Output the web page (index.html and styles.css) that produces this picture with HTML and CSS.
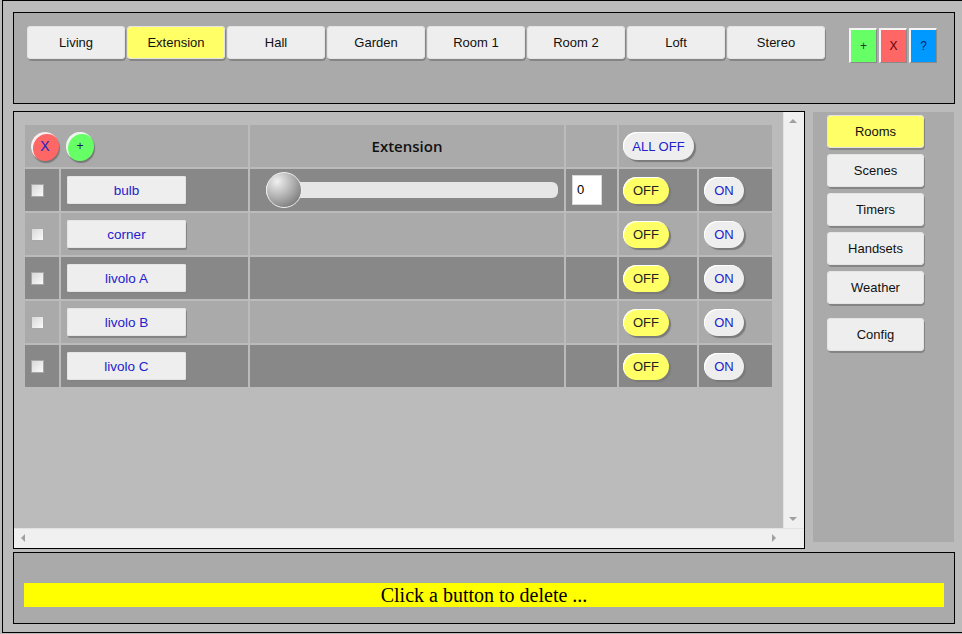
FILE: index.html
```html
<!DOCTYPE html>
<html>
<head>
<meta charset="utf-8">
<title>Rooms</title>
<link rel="stylesheet" href="styles.css">
</head>
<body>
<div class="app">
  <header class="topbar">
    <nav class="tabs">
      <button class="btn tab">Living</button>
      <button class="btn tab active">Extension</button>
      <button class="btn tab">Hall</button>
      <button class="btn tab">Garden</button>
      <button class="btn tab">Room 1</button>
      <button class="btn tab">Room 2</button>
      <button class="btn tab">Loft</button>
      <button class="btn tab">Stereo</button>
    </nav>
    <div class="tools">
      <button class="sq sq-green">+</button>
      <button class="sq sq-red">X</button>
      <button class="sq sq-blue">?</button>
    </div>
  </header>

  <div class="middle">
    <section class="mainpanel">
      <div class="viewport">
        <div class="content">
          <div class="grid">
            <div class="cell head c12">
              <button class="circle circle-red">X</button>
              <button class="circle circle-green">+</button>
            </div>
            <div class="cell head title">Extension</div>
            <div class="cell head"></div>
            <div class="cell head c56"><button class="pill pill-white alloff">ALL OFF</button></div>

            <div class="cell dark c1"><span class="check"></span></div>
            <div class="cell dark c2"><button class="btn name">bulb</button></div>
            <div class="cell dark c3">
              <div class="slider"><div class="track"></div><div class="thumb"></div></div>
            </div>
            <div class="cell dark c4"><div class="num">0</div></div>
            <div class="cell dark c5"><button class="pill pill-yellow off">OFF</button></div>
            <div class="cell dark c6"><button class="pill pill-white on">ON</button></div>

            <div class="cell light c1"><span class="check"></span></div>
            <div class="cell light c2"><button class="btn name">corner</button></div>
            <div class="cell light c3"></div>
            <div class="cell light c4"></div>
            <div class="cell light c5"><button class="pill pill-yellow off">OFF</button></div>
            <div class="cell light c6"><button class="pill pill-white on">ON</button></div>

            <div class="cell dark c1"><span class="check"></span></div>
            <div class="cell dark c2"><button class="btn name">livolo A</button></div>
            <div class="cell dark c3"></div>
            <div class="cell dark c4"></div>
            <div class="cell dark c5"><button class="pill pill-yellow off">OFF</button></div>
            <div class="cell dark c6"><button class="pill pill-white on">ON</button></div>

            <div class="cell light c1"><span class="check"></span></div>
            <div class="cell light c2"><button class="btn name">livolo B</button></div>
            <div class="cell light c3"></div>
            <div class="cell light c4"></div>
            <div class="cell light c5"><button class="pill pill-yellow off">OFF</button></div>
            <div class="cell light c6"><button class="pill pill-white on">ON</button></div>

            <div class="cell dark c1"><span class="check"></span></div>
            <div class="cell dark c2"><button class="btn name">livolo C</button></div>
            <div class="cell dark c3"></div>
            <div class="cell dark c4"></div>
            <div class="cell dark c5"><button class="pill pill-yellow off">OFF</button></div>
            <div class="cell dark c6"><button class="pill pill-white on">ON</button></div>
          </div>
        </div>
        <div class="vscroll">
          <span class="arrow arrow-up"></span>
          <span class="arrow arrow-down"></span>
        </div>
      </div>
      <div class="hbar">
        <div class="hscroll">
          <span class="arrow arrow-left"></span>
          <span class="arrow arrow-right"></span>
        </div>
        <div class="corner"></div>
      </div>
    </section>

    <aside class="side">
      <button class="btn sidebtn active">Rooms</button>
      <button class="btn sidebtn">Scenes</button>
      <button class="btn sidebtn">Timers</button>
      <button class="btn sidebtn">Handsets</button>
      <button class="btn sidebtn">Weather</button>
      <button class="btn sidebtn config">Config</button>
    </aside>
  </div>

  <footer class="bottom">
    <div class="msg">Click a button to delete ...</div>
  </footer>
</div>
</body>
</html>
```

FILE: styles.css
```css
html, body {
  margin: 0;
  padding: 0;
  background: #bbbbbb;
  overflow: hidden;
}

body {
  font-family: "Liberation Sans", Arial, sans-serif;
  font-size: 13px;
}

button {
  font-family: "Liberation Sans", Arial, sans-serif;
  font-size: 13px;
  padding: 0;
  margin: 0;
  border: none;
  cursor: pointer;
}

.app {
  box-sizing: border-box;
  margin-left: 2px;
  width: 990px;
  height: 633px;
  border: 1px solid #000;
  background: #bbbbbb;
  padding: 11px 0 0 10px;
}

/* top bar */
.topbar {
  box-sizing: border-box;
  width: 942px;
  height: 92px;
  border: 1px solid #000;
  background: #aaaaaa;
  display: flex;
  align-items: flex-start;
  padding: 13px 0 0 13px;
}

.tabs {
  display: flex;
  gap: 2px;
}

.btn {
  background: #eeeeee;
  color: #111;
  border-radius: 4px;
  box-shadow: 1px 2px 0 #858585, inset 0 0 0 1px #e4e4e4;
}

.btn.active {
  background: #ffff66;
}

.tab {
  width: 98px;
  height: 33px;
}

.tools {
  display: flex;
  gap: 2px;
  margin: 2px 0 0 24px;
}

.sq {
  box-sizing: border-box;
  width: 28px;
  height: 35px;
  font-size: 12px;
  border-top: 2px solid #f4f4f4;
  border-left: 2px solid #f4f4f4;
  border-right: 1px solid #8a8a8a;
  border-bottom: 1px solid #8a8a8a;
}

.sq-green { background: #66ff66; color: #333; }
.sq-red { background: #ff6666; color: #660000; }
.sq-blue { background: #0099ff; color: #002266; }

/* middle */
.middle {
  display: flex;
  align-items: flex-start;
  gap: 8px;
  margin-top: 7px;
}

.mainpanel {
  box-sizing: border-box;
  width: 792px;
  height: 438px;
  border: 1px solid #000;
  display: flex;
  flex-direction: column;
}

.viewport {
  display: flex;
  height: 416px;
}

.content {
  flex: 1;
  background: #bbbbbb;
  overflow: hidden;
}

.vscroll {
  position: relative;
  width: 20px;
  background: #f0f0f0;
  border-left: 1px solid #e2e2e2;
}

.hbar {
  display: flex;
  height: 20px;
}

.hscroll {
  position: relative;
  flex: 1;
  background: #f0f0f0;
  border-top: 1px solid #e2e2e2;
}

.corner {
  width: 21px;
  background: #f0f0f0;
  border-top: 1px solid #e2e2e2;
}

.arrow {
  position: absolute;
  width: 0;
  height: 0;
}

.arrow-up {
  left: 5px;
  top: 7px;
  border-left: 4px solid transparent;
  border-right: 4px solid transparent;
  border-bottom: 4px solid #a0a0a0;
}

.arrow-down {
  left: 5px;
  bottom: 7px;
  border-left: 4px solid transparent;
  border-right: 4px solid transparent;
  border-top: 4px solid #a0a0a0;
}

.arrow-left {
  left: 7px;
  top: 5px;
  border-top: 4px solid transparent;
  border-bottom: 4px solid transparent;
  border-right: 4px solid #a0a0a0;
}

.arrow-right {
  right: 7px;
  top: 5px;
  border-top: 4px solid transparent;
  border-bottom: 4px solid transparent;
  border-left: 4px solid #a0a0a0;
}

/* grid table */
.grid {
  display: grid;
  grid-template-columns: 34px 187px 314px 51px 78px 73px;
  grid-auto-rows: 42px;
  gap: 2px;
  margin: 13px 0 0 11px;
  width: max-content;
}

.cell {
  display: flex;
  align-items: center;
  padding-left: 6px;
  box-sizing: border-box;
}

.head { background: #aaaaaa; }
.dark { background: #888888; }
.light { background: #aaaaaa; }

.c12 {
  grid-column: span 2;
  gap: 7px;
}

.c56 {
  grid-column: span 2;
  padding-left: 4px;
}

.c5 { padding-left: 4px; }
.c6 { padding-left: 5px; }

.title {
  justify-content: center;
  padding-left: 0;
  font-family: "Comic Sans MS", "Open Sans", sans-serif;
  font-weight: 600;
  font-size: 15px;
  color: #111;
}

.circle {
  width: 28px;
  height: 29px;
  border-radius: 50%;
  color: #2222cc;
  box-shadow: 1px 2px 1px #777, inset 2px 2px 0 #f2f2f2;
}

.circle-red { background: #ff6666; font-size: 14px; }
.circle-green { background: #66ff66; font-size: 12px; color: #111166; }

.pill {
  height: 27px;
  border-radius: 14px;
  box-shadow: 2px 2px 1px #7a7a7a, inset 1px 1px 0 #ffffff;
}

.pill-white { background: #eeeeee; color: #2222cc; }
.pill-yellow { background: #ffff66; color: #222; }

.alloff { width: 71px; height: 28px; }
.off { width: 46px; }
.on { width: 40px; }

.check {
  box-sizing: border-box;
  width: 13px;
  height: 13px;
  border: 1px solid #a8a8a8;
  background: linear-gradient(135deg, #d8d8d8, #fbfbfb);
}

.name {
  width: 119px;
  height: 28px;
  color: #2222cc;
  font-size: 13.5px;
  border-radius: 2px;
}

.slider {
  position: relative;
  margin-left: 10px;
  width: 292px;
  height: 36px;
  display: flex;
  align-items: center;
}

.track {
  width: 100%;
  height: 16px;
  border-radius: 6px;
  background: #e6e6e6;
}

.thumb {
  position: absolute;
  left: 0;
  top: 0;
  width: 36px;
  height: 36px;
  box-sizing: border-box;
  border-radius: 50%;
  border: 1px solid #eeeeee;
  background: radial-gradient(circle at 30% 25%, #f0f0f0 0%, #aaaaaa 50%, #606060 100%);
}

.num {
  box-sizing: border-box;
  width: 30px;
  height: 30px;
  background: #ffffff;
  border: 1px solid #d8d8d8;
  font-size: 13px;
  line-height: 28px;
  padding-left: 4px;
  color: #000;
}

/* side panel */
.side {
  box-sizing: border-box;
  width: 141px;
  height: 430px;
  margin-top: 1px;
  background: #aaaaaa;
  padding: 3px 0 0 14px;
  display: flex;
  flex-direction: column;
  align-items: flex-start;
  gap: 6px;
}

.sidebtn {
  width: 97px;
  height: 33px;
}

.sidebtn.config {
  margin-top: 8px;
}

/* bottom */
.bottom {
  box-sizing: border-box;
  width: 942px;
  height: 72px;
  margin-top: 3px;
  border: 1px solid #000;
  background: #aaaaaa;
  padding: 30px 0 0 10px;
}

.msg {
  width: 920px;
  height: 24px;
  background: #ffff00;
  text-align: center;
  font-family: "Liberation Serif", "Times New Roman", serif;
  font-size: 20px;
  line-height: 25px;
  color: #000;
}
```
